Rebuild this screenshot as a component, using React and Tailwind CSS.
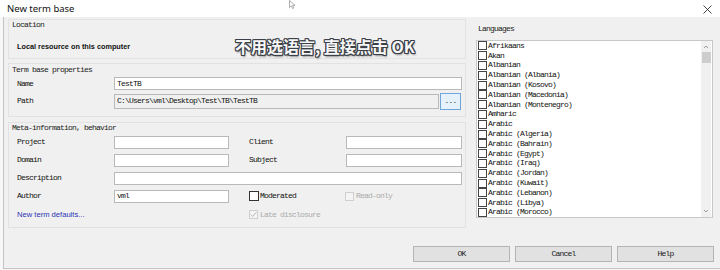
import React from "react";

const mono = "font-['Liberation_Mono','DejaVu_Sans_Mono',monospace] text-[8px] tracking-[-0.8px] leading-none";

const languages = [
  "Afrikaans",
  "Akan",
  "Albanian",
  "Albanian (Albania)",
  "Albanian (Kosovo)",
  "Albanian (Macedonia)",
  "Albanian (Montenegro)",
  "Amharic",
  "Arabic",
  "Arabic (Algeria)",
  "Arabic (Bahrain)",
  "Arabic (Egypt)",
  "Arabic (Iraq)",
  "Arabic (Jordan)",
  "Arabic (Kuwait)",
  "Arabic (Lebanon)",
  "Arabic (Libya)",
  "Arabic (Morocco)",
];

function Input({ className = "", value = "", gray = false }) {
  return (
    <div
      className={`h-[13px] border border-[#b9b9b9] flex items-center px-[2px] ${
        gray ? "bg-[#f0f0f0]" : "bg-white"
      } ${className}`}
    >
      <span className={`${mono} text-[#111]`}>{value}</span>
    </div>
  );
}

function Label({ children, className = "" }) {
  return <div className={`${mono} text-[#111] ${className}`}>{children}</div>;
}

function GroupTitle({ children }) {
  return (
    <div className={`${mono} text-[#222] h-[10px] flex items-center pl-[3px]`}>{children}</div>
  );
}

export default function App() {
  return (
    <div className="w-[720px] h-[270px] bg-[#f7f7f7] relative overflow-hidden font-['Liberation_Sans',Arial,sans-serif]">
      {/* title bar */}
      <div className="h-[17px] bg-white flex items-center justify-between pl-[7px] pr-[8px]">
        <span className="font-['Noto_Sans',sans-serif] text-[9.5px] text-[#111] leading-none">New term base</span>
        <svg width="9" height="9" viewBox="0 0 9 9" className="mt-[1px]">
          <path d="M0.5 0.5 L8.5 8.5 M8.5 0.5 L0.5 8.5" stroke="#333" strokeWidth="0.9" />
        </svg>
      </div>

      {/* content */}
      <div className="ml-[3px] h-[252px] bg-[#f0f0f0] border-l border-b border-[#c4c4c4] flex flex-col">
        <div className="flex h-[211px]">
          {/* left column */}
          <div className="pl-[4px] w-[463px] flex flex-col">
            {/* Location */}
            <div className="mt-[2px] w-[458px] h-[40px] border border-[#e2e2e2] flex flex-col">
              <GroupTitle>Location</GroupTitle>
              <div className="mt-[7px] h-[19px] flex items-center pl-[8px]">
                <span className="text-[7.3px] font-bold text-[#111] leading-none">
                  Local resource on this computer
                </span>
              </div>
            </div>

            {/* Term base properties */}
            <div className="mt-[4px] w-[458px] h-[54px] border border-[#e2e2e2] flex flex-col">
              <div className="mt-[1px]">
                <GroupTitle>Term base properties</GroupTitle>
              </div>
              <div className="h-[17px] flex items-center pl-[8px] pr-[3px]">
                <Label className="w-[97px]">Name</Label>
                <Input className="flex-1" value="TestTB" />
              </div>
              <div className="h-[18px] flex items-center pl-[8px] pr-[4px]">
                <Label className="w-[97px]">Path</Label>
                <div className="flex-1 flex items-center gap-[1px]">
                  <Input className="flex-1 h-[15px]" gray value="C:\Users\vml\Desktop\Test\TB\TestTB" />
                  <div className="w-[21px] h-[17px] border border-[#6ea6dc] bg-[#e5f1fb] flex items-center justify-center">
                    <span className={`${mono} text-[#333]`}>...</span>
                  </div>
                </div>
              </div>
            </div>

            {/* Meta-information */}
            <div className="mt-[5px] w-[458px] h-[106px] border border-[#e2e2e2] flex flex-col">
              <GroupTitle>Meta-information, behavior</GroupTitle>
              <div className="h-[18px] flex items-center pl-[8px] pr-[3px]">
                <Label className="w-[97px]">Project</Label>
                <Input className="w-[115px]" />
                <Label className="w-[97px] ml-[20px]">Client</Label>
                <Input className="flex-1" />
              </div>
              <div className="h-[18px] flex items-center pl-[8px] pr-[3px]">
                <Label className="w-[97px]">Domain</Label>
                <Input className="w-[115px]" />
                <Label className="w-[97px] ml-[20px]">Subject</Label>
                <Input className="flex-1" />
              </div>
              <div className="h-[18px] flex items-center pl-[8px] pr-[3px]">
                <Label className="w-[97px]">Description</Label>
                <Input className="flex-1" />
              </div>
              <div className="h-[18px] flex items-center pl-[8px] pr-[3px]">
                <Label className="w-[97px]">Author</Label>
                <Input className="w-[115px]" value="vml" />
                <div className="ml-[20px] w-[96px] flex items-center gap-[1px]">
                  <div className="w-[10px] h-[10px] border border-[#333] bg-white" />
                  <Label>Moderated</Label>
                </div>
                <div className="flex items-center gap-[2px]">
                  <div className="w-[9px] h-[9px] border border-[#cfcfcf] bg-[#f4f4f4]" />
                  <Label className="!text-[#ababab]">Read-only</Label>
                </div>
              </div>
              <div className="h-[19px] flex items-center pl-[8px] pr-[3px]">
                <span className="w-[232px] text-[7.6px] text-[#2b33b5] leading-none">New term defaults...</span>
                <div className="flex items-center gap-[2px]">
                  <div className="w-[9px] h-[9px] border border-[#cfcfcf] bg-[#f4f4f4] flex items-center justify-center">
                    <svg width="7" height="7" viewBox="0 0 7 7">
                      <path d="M0.8 3.6 L2.7 5.5 L6.3 1.2" fill="none" stroke="#b5b5b5" strokeWidth="0.9" />
                    </svg>
                  </div>
                  <Label className="!text-[#ababab]">Late disclosure</Label>
                </div>
              </div>
            </div>
          </div>

          {/* right column */}
          <div className="ml-[9px] w-[237px] flex flex-col">
            <div className="mt-[7px] h-[10px] flex items-center pl-[2px]">
              <Label className="!text-[#222]">Languages</Label>
            </div>
            <div className="mt-[6px] h-[178px] border border-[#c8c8c8] bg-white flex">
              <div className="flex-1 pl-[1px] flex flex-col overflow-hidden">
                {languages.map((l) => (
                  <div key={l} className="h-[9.8px] flex items-center shrink-0">
                    <div className="w-[9px] h-[9px] border border-[#444] bg-white shrink-0" />
                    <span className={`${mono} text-[#111] ml-[1px]`}>{l}</span>
                  </div>
                ))}
              </div>
              <div className="w-[10px] bg-[#f0f0f0] flex flex-col items-center mr-[1px]">
                <svg width="6" height="6" viewBox="0 0 6 6" className="mt-[3px]">
                  <path d="M1 4 L3 2 L5 4" fill="none" stroke="#888" strokeWidth="0.8" />
                </svg>
                <div className="mt-[2px] w-[9px] h-[11px] bg-[#cdcdcd]" />
                <div className="flex-1" />
                <svg width="6" height="6" viewBox="0 0 6 6" className="mb-[3px]">
                  <path d="M1 2 L3 4 L5 2" fill="none" stroke="#888" strokeWidth="0.8" />
                </svg>
              </div>
            </div>
          </div>
        </div>

        {/* buttons */}
        <div className="mt-[18px] flex justify-end gap-[5px] pr-[6px]">
          {["OK", "Cancel", "Help"].map((b) => (
            <div
              key={b}
              className="w-[97px] h-[16px] bg-[#e1e1e1] border border-[#b4b4b4] flex items-center justify-center"
            >
              <span className={`${mono} text-[#222]`}>{b}</span>
            </div>
          ))}
        </div>
      </div>

      {/* overlay annotation */}
      <div className="absolute left-[235px] top-[36px] font-['Noto_Sans_CJK_SC','Noto_Sans',sans-serif] font-bold text-[16px] leading-[20px] text-[#f7f7f7] [text-shadow:1px_0_0_#3b4048,-1px_0_0_#3b4048,0_1px_0_#3b4048,0_-1px_0_#3b4048,1px_1px_0_#3b4048,-1px_-1px_0_#3b4048,1px_-1px_0_#3b4048,-1px_1px_0_#3b4048,1px_2px_2px_rgba(0,0,0,0.45)] whitespace-nowrap">
        不用选语言, 直接点击 OK
      </div>

      {/* mouse cursor */}
      <svg className="absolute left-[289px] top-[0px]" width="8" height="9" viewBox="0 0 8 9">
        <path d="M0.5 0.5 L0.5 7.5 L2.3 5.8 L3.6 8.5 L4.8 8 L3.6 5.3 L6 5.3 Z" fill="#fff" stroke="#777" strokeWidth="0.6" />
      </svg>
    </div>
  );
}
